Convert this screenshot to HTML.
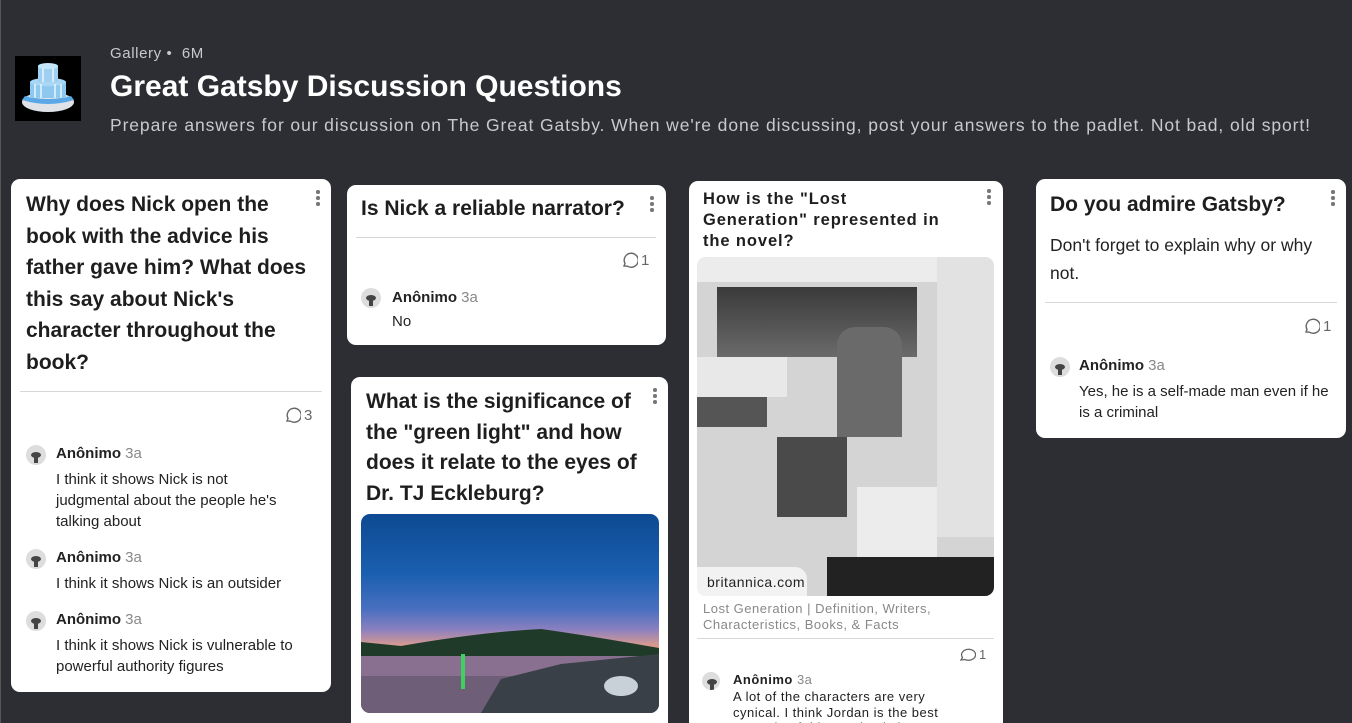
<!DOCTYPE html>
<html><head><meta charset="utf-8"><style>
*{margin:0;padding:0;box-sizing:border-box}
html,body{width:1352px;height:723px;overflow:hidden}
body{background:#2c2e33;font-family:"Liberation Sans",sans-serif;position:relative;color:#1e1e1e}
.abs{position:absolute}
.card{position:absolute;background:#fff;border-radius:9px;overflow:hidden}
.t{position:absolute;font-weight:bold;color:#1e1e1e}
.dots{position:absolute;width:4px}
.dots i{display:block;width:3.5px;height:3.5px;border-radius:50%;background:#777;margin-bottom:2.5px}
.hr{position:absolute;height:1px;background:#d8d8d8}
.cc{position:absolute;font-size:15px;color:#666;display:flex;align-items:center;gap:3px}
.av{position:absolute;width:20px;height:20px;border-radius:50%;background:#ddd;overflow:hidden}
.av:after{content:"";position:absolute;left:5px;top:7px;width:10px;height:6px;border-radius:50%;background:#444}
.av:before{content:"";position:absolute;left:8px;top:12px;width:4px;height:6px;background:#444}
.nm{position:absolute;font-size:15px;font-weight:bold;color:#222}
.nm span{font-weight:normal;color:#888}
.tx{position:absolute;font-size:15px;color:#222;line-height:21px}
</style></head><body>
<div class="abs" style="left:0;top:0;width:1px;height:723px;background:#555"></div>
<div class="abs" style="left:15px;top:56px;width:66px;height:65px;background:#000">
<svg width="66" height="65" viewBox="0 0 66 65"><ellipse cx="33" cy="46" rx="26" ry="10" fill="#dfe3e8"/><path d="M7 44 Q33 52 59 44 L56 40 Q33 46 10 40Z" fill="#5aa9e6"/><rect x="15" y="26" width="36" height="16" fill="#8cc8f0"/><ellipse cx="33" cy="26" rx="18" ry="4" fill="#a9d8f5"/><rect x="23" y="10" width="20" height="16" fill="#9fd0f2"/><ellipse cx="33" cy="10" rx="10" ry="3" fill="#c4e6fa"/><path d="M20 28v14M26 28v14M40 28v14M46 28v14M28 12v14M38 12v14" stroke="#e8f6ff" stroke-width="1.5"/></svg>
</div>
<div class="abs" style="left:110px;top:45px;font-size:15px;color:#c8c9cc;letter-spacing:.6px">Gallery • &nbsp;6M</div>
<div class="abs" style="left:110px;top:70px;font-size:30px;font-weight:bold;color:#fff">Great Gatsby Discussion Questions</div>
<div class="abs" style="left:110px;top:115px;font-size:17.5px;color:#c8c9cc;letter-spacing:.9px;white-space:nowrap">Prepare answers for our discussion on The Great Gatsby. When we're done discussing, post your answers to the padlet. Not bad, old sport!</div>

<div class="card" style="left:11px;top:179px;width:320px;height:513px">
<div class="t" style="left:15px;top:10px;width:290px;font-size:21px;line-height:31.6px">Why does Nick open the book with the advice his father gave him? What does this say about Nick's character throughout the book?</div>
<div class="dots" style="left:305px;top:11px"><i></i><i></i><i></i></div>
<div class="hr" style="left:9px;top:212px;width:302px"></div>
<div class="cc" style="left:273px;top:228px"><svg width="17" height="17" viewBox="0 0 17 17"><path d="M3 14 L4 11.5 A7 7 0 1 1 6.5 14.2 Z" fill="none" stroke="#666" stroke-width="1.4"/></svg>3</div>
<div class="av" style="left:15px;top:266px"></div>
<div class="nm" style="left:45px;top:266px">Anônimo <span>3a</span></div>
<div class="tx" style="left:45px;top:290px;width:245px">I think it shows Nick is not judgmental about the people he's talking about</div>
<div class="av" style="left:15px;top:370px"></div>
<div class="nm" style="left:45px;top:370px">Anônimo <span>3a</span></div>
<div class="tx" style="left:45px;top:394px">I think it shows Nick is an outsider</div>
<div class="av" style="left:15px;top:432px"></div>
<div class="nm" style="left:45px;top:432px">Anônimo <span>3a</span></div>
<div class="tx" style="left:45px;top:456px;width:270px">I think it shows Nick is vulnerable to powerful authority figures</div>
</div>

<div class="card" style="left:347px;top:185px;width:319px;height:160px">
<div class="t" style="left:14px;top:12px;font-size:21px">Is Nick a reliable narrator?</div>
<div class="dots" style="left:303px;top:11px"><i></i><i></i><i></i></div>
<div class="hr" style="left:9px;top:52px;width:300px"></div>
<div class="cc" style="left:274px;top:67px"><svg width="17" height="17" viewBox="0 0 17 17"><path d="M3 14 L4 11.5 A7 7 0 1 1 6.5 14.2 Z" fill="none" stroke="#666" stroke-width="1.4"/></svg>1</div>
<div class="av" style="left:14px;top:103px"></div>
<div class="nm" style="left:45px;top:104px">Anônimo <span>3a</span></div>
<div class="tx" style="left:45px;top:126px">No</div>
</div>

<div class="card" style="left:351px;top:377px;width:317px;height:346px;border-radius:9px 9px 0 0">
<div class="t" style="left:15px;top:10px;width:280px;font-size:21px;line-height:30.5px">What is the significance of the "green light" and how does it relate to the eyes of Dr. TJ Eckleburg?</div>
<div class="dots" style="left:302px;top:11px"><i></i><i></i><i></i></div>
<div class="abs" style="left:10px;top:137px;width:298px;height:199px;border-radius:9px;overflow:hidden;background:linear-gradient(180deg,#0d4a92 0%,#1a5fb0 30%,#4a6fc0 48%,#8a80c0 58%,#d89a90 66%,#f09a60 70%,#2a3a30 72%)">
<svg class="abs" style="left:0;top:0" width="298" height="199"><path d="M0 128 L40 132 Q120 118 180 115 Q230 122 298 134 L298 142 L0 142Z" fill="#1f3a28"/><rect x="0" y="142" width="298" height="57" fill="#6e5e78"/><rect x="0" y="142" width="298" height="20" fill="#8a7090"/><rect x="100" y="140" width="4" height="35" fill="#40d060"/><path d="M120 199 L140 165 L200 150 L298 140 L298 199Z" fill="#3a4048"/><ellipse cx="260" cy="172" rx="17" ry="10" fill="#c8d0d8"/></svg>
</div>
</div>

<div class="card" style="left:689px;top:181px;width:314px;height:542px;border-radius:9px 9px 0 0">
<div class="t" style="left:14px;top:8px;width:290px;font-size:16.5px;line-height:21px;letter-spacing:.9px;white-space:nowrap">How is the "Lost<br>Generation" represented in<br>the novel?</div>
<div class="dots" style="left:298px;top:8px"><i></i><i></i><i></i></div>
<div class="abs" style="left:8px;top:76px;width:297px;height:339px;border-radius:9px;overflow:hidden;background:#d4d4d4">
<div class="abs" style="left:0;top:0;width:297px;height:25px;background:#ececec"></div>
<div class="abs" style="left:20px;top:30px;width:200px;height:70px;background:linear-gradient(180deg,#3a3a3a,#6a6a6a)"></div>
<div class="abs" style="left:0;top:100px;width:90px;height:40px;background:#e8e8e8"></div>
<div class="abs" style="left:0;top:140px;width:70px;height:30px;background:#555"></div>
<div class="abs" style="left:80px;top:180px;width:70px;height:80px;background:#4a4a4a"></div>
<div class="abs" style="left:140px;top:70px;width:65px;height:110px;background:#6a6a6a;border-radius:18px 18px 0 0"></div>
<div class="abs" style="left:160px;top:230px;width:80px;height:70px;background:#ececec"></div>
<div class="abs" style="left:240px;top:0;width:57px;height:280px;background:#e2e2e2"></div>
<div class="abs" style="left:130px;top:300px;width:167px;height:39px;background:#222"></div>
<div class="abs" style="left:0;top:310px;width:110px;height:29px;background:#f2f2f2;border-radius:0 12px 0 0;font-size:14px;padding:7px 0 0 10px;letter-spacing:.5px;color:#222">britannica.com</div>
</div>
<div class="abs" style="left:14px;top:420px;width:290px;font-size:13px;line-height:15.5px;color:#888;letter-spacing:.5px">Lost Generation | Definition, Writers, Characteristics, Books, &amp; Facts</div>
<div class="hr" style="left:8px;top:457px;width:297px"></div>
<div class="cc" style="left:270px;top:466px;font-size:13px"><svg width="17" height="14" viewBox="0 0 17 14"><path d="M2 12 L3.5 9.5 A7 5.5 0 1 1 6 11.5 Z" fill="none" stroke="#666" stroke-width="1.3"/></svg>1</div>
<div class="av" style="left:13px;top:491px;width:18px;height:18px"></div>
<div class="nm" style="left:44px;top:491px;font-size:13px;letter-spacing:.5px">Anônimo <span>3a</span></div>
<div class="tx" style="left:44px;top:508px;font-size:13px;line-height:15.5px;width:240px;letter-spacing:.5px">A lot of the characters are very cynical. I think Jordan is the best example of this. Jordan is just</div>
</div>

<div class="card" style="left:1036px;top:179px;width:310px;height:259px">
<div class="t" style="left:14px;top:14px;font-size:21px">Do you admire Gatsby?</div>
<div class="dots" style="left:295px;top:11px"><i></i><i></i><i></i></div>
<div class="tx" style="left:14px;top:52px;width:290px;font-size:17.5px;line-height:28px">Don't forget to explain why or why not.</div>
<div class="hr" style="left:9px;top:123px;width:292px"></div>
<div class="cc" style="left:267px;top:139px"><svg width="17" height="17" viewBox="0 0 17 17"><path d="M3 14 L4 11.5 A7 7 0 1 1 6.5 14.2 Z" fill="none" stroke="#666" stroke-width="1.4"/></svg>1</div>
<div class="av" style="left:14px;top:178px"></div>
<div class="nm" style="left:43px;top:178px">Anônimo <span>3a</span></div>
<div class="tx" style="left:43px;top:202px;width:250px">Yes, he is a self-made man even if he is a criminal</div>
</div>
</body></html>
